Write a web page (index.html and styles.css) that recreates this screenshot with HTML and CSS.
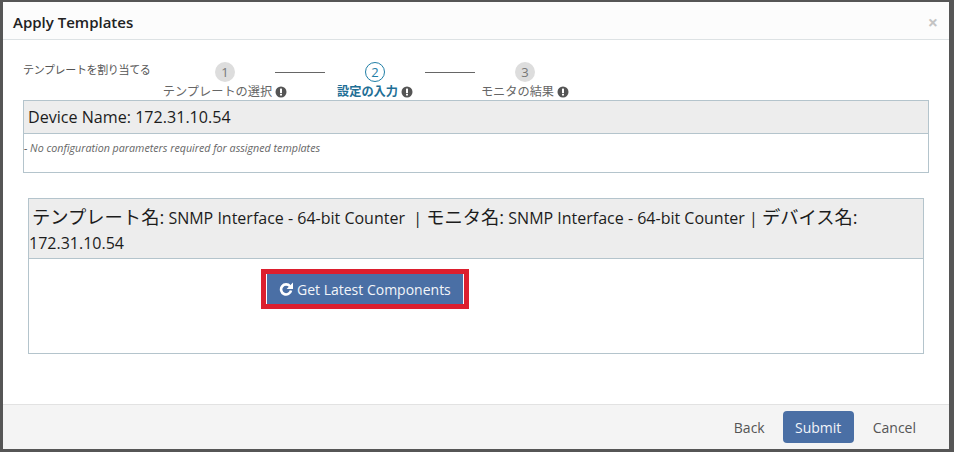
FILE: index.html
```html
<!DOCTYPE html>
<html lang="ja">
<head>
<meta charset="utf-8">
<title>Apply Templates</title>
<link rel="stylesheet" href="styles.css">
</head>
<body>
<div class="dialog">
  <header class="dialog-head">
    <h1 class="title">Apply Templates</h1>
    <span class="close">×</span>
  </header>
  <main class="dialog-body">
    <div class="wizard">
      <div class="intro">テンプレートを割り当てる</div>
      <div class="steps">
        <div class="step">
          <span class="num">1</span>
          <span class="label">テンプレートの選択 <svg class="info" viewBox="0 0 12 12"><circle cx="6" cy="6" r="5.5" fill="#555"/><rect x="5" y="2.6" width="2" height="4.4" fill="#fff"/><rect x="5" y="7.8" width="2" height="1.7" fill="#fff"/></svg></span>
        </div>
        <div class="line"></div>
        <div class="step active">
          <span class="num">2</span>
          <span class="label">設定の入力 <svg class="info" viewBox="0 0 12 12"><circle cx="6" cy="6" r="5.5" fill="#555"/><rect x="5" y="2.6" width="2" height="4.4" fill="#fff"/><rect x="5" y="7.8" width="2" height="1.7" fill="#fff"/></svg></span>
        </div>
        <div class="line"></div>
        <div class="step">
          <span class="num">3</span>
          <span class="label">モニタの結果 <svg class="info" viewBox="0 0 12 12"><circle cx="6" cy="6" r="5.5" fill="#555"/><rect x="5" y="2.6" width="2" height="4.4" fill="#fff"/><rect x="5" y="7.8" width="2" height="1.7" fill="#fff"/></svg></span>
        </div>
      </div>
    </div>
    <section class="panel device">
      <div class="panel-head device-head">Device Name: 172.31.10.54</div>
      <div class="device-body">- No configuration parameters required for assigned templates</div>
    </section>
    <section class="panel template">
      <div class="panel-head template-head"><span class="ja">テンプレート名:</span> SNMP Interface - 64-bit Counter &nbsp;| <span class="ja">モニタ名:</span> SNMP Interface - 64-bit Counter | <span class="ja">デバイス名:</span> 172.31.10.54</div>
      <div class="template-body">
        <div class="highlight">
          <button class="fetch" type="button"><svg class="refresh" viewBox="0 0 14 14"><path d="M11 4.3A5 5 0 1 0 12 8.4" fill="none" stroke="#fff" stroke-width="2.6"/><path d="M14 .6v6.4H7.6z" fill="#fff"/></svg>Get Latest Components</button>
        </div>
      </div>
    </section>
  </main>
  <footer class="dialog-foot">
    <span class="link">Back</span>
    <button class="submit" type="button">Submit</button>
    <span class="link">Cancel</span>
  </footer>
</div>
</body>
</html>
```
FILE: styles.css
```css
* { box-sizing: border-box; }
html, body { height: 100%; }
body {
  margin: 0;
  padding: 2px 5px 3px 3px;
  background: #565656;
  font-family: "Open Sans", "Noto Sans CJK JP", sans-serif;
  color: #333;
  overflow: hidden;
}
.dialog {
  height: 447px;
  display: flex;
  flex-direction: column;
  background: #fff;
  border-radius: 3px;
}
.dialog-head {
  height: 38px;
  flex: none;
  display: flex;
  justify-content: space-between;
  align-items: center;
  padding: 2px 11px 0 10px;
  background: #fcfcfc;
  border-bottom: 1px solid #dde2e4;
}
.title { margin: 0; font-size: 15px; font-weight: 600; color: #222; }
.close { font-size: 18px; font-weight: 700; color: #c4c4c4; line-height: 1; }
.dialog-body { flex: 1; padding: 21px 20px 0; }
.wizard { display: flex; height: 39px; }
.intro { width: 152px; flex: none; font-size: 11px; letter-spacing: -0.35px; color: #555; }
.steps { display: flex; padding-top: 1px; }
.step { width: 100px; display: flex; flex-direction: column; align-items: center; color: #666; }
.num {
  width: 20px;
  height: 20px;
  border-radius: 50%;
  background: #ddd;
  color: #777;
  font-size: 13px;
  line-height: 20px;
  text-align: center;
}
.label {
  white-space: nowrap;
  font-size: 12.2px;
  line-height: 18px;
  margin-top: 1px;
  display: flex;
  align-items: center;
  gap: 3px;
}
.info { width: 12px; height: 12px; }
.line { width: 50px; height: 1px; background: #666; margin-top: 10px; }
.active { color: #1f6f96; font-weight: 600; }
.active .num { background: #fff; border: 1px solid #1f7ea6; color: #1f7ea6; line-height: 18px; font-weight: 400; }
.panel { border: 1px solid #b4c4cc; }
.panel-head { background: #ededed; border-bottom: 1px solid #b4c4cc; color: #1c1c1c; }
.device { height: 73px; }
.device-head { height: 33px; padding: 0 4px; font-size: 16.1px; line-height: 32px; }
.device-body { font-size: 10.7px; font-style: italic; color: #666; padding-top: 7px; }
.template { height: 156px; margin: 25px 5px 0; }
.template-head { height: 60px; padding: 5px 0 0 0; font-size: 16px; line-height: 25px; text-indent: 3px; }
.ja { font-size: 18.3px; }
.template-body { padding: 10px 0 0 232px; }
.highlight { display: inline-block; border: 5px solid #dc1f2e; padding: 0; }
.fetch {
  display: flex;
  align-items: center;
  height: 30px;
  width: 198px;
  padding: 0 0 0 12px;
  border: 0;
  border-left: 1px solid #fff;
  border-right: 1px solid #fff;
  background: #4a6fa5;
  color: #f2f5f9;
  font: 14px "Open Sans", sans-serif;
  white-space: nowrap;
}
.refresh { width: 14px; height: 14px; margin-right: 4px; }
.dialog-foot {
  height: 45px;
  flex: none;
  display: flex;
  justify-content: flex-end;
  align-items: center;
  padding: 0 33px 0 0;
  background: #f4f4f4;
  border-top: 1px solid #e2e2e2;
}
.link { font-size: 14px; color: #555; }
.submit {
  width: 71px;
  height: 32px;
  margin: 0 19px 0 18px;
  border: 0;
  border-radius: 4px;
  background: #4a6fa5;
  color: #f2f5f9;
  font: 14px "Open Sans", sans-serif;
}
```
